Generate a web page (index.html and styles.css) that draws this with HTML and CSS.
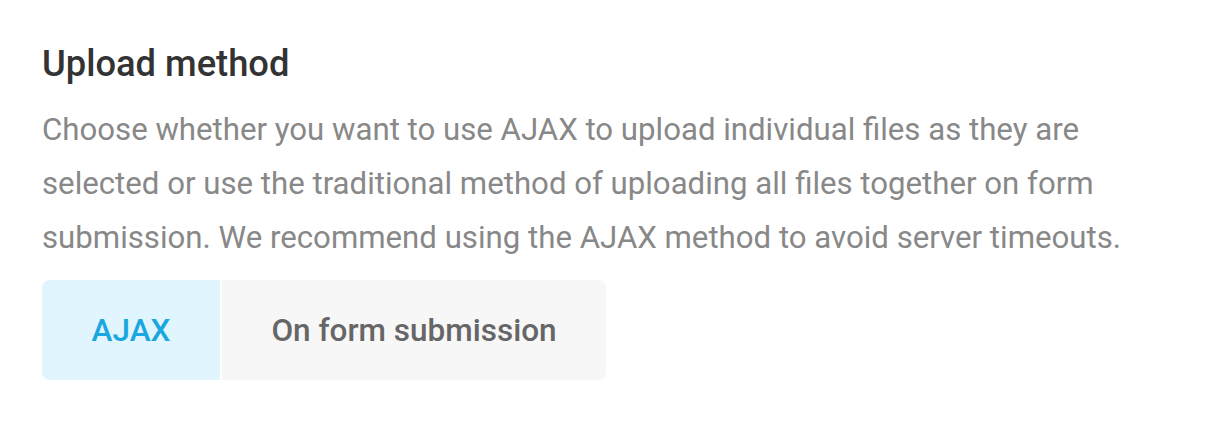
FILE: index.html
```html
<!DOCTYPE html>
<html>
<head>
<meta charset="utf-8">
<link rel="stylesheet" href="styles.css">
</head>
<body>
<div class="setting">
  <h2 class="title">Upload method</h2>
  <p class="desc">Choose whether you want to use AJAX to upload individual files as they are selected or use the traditional method of uploading all files together on form submission. We recommend using the AJAX method to avoid server timeouts.</p>
  <div class="segmented">
    <button class="seg active">AJAX</button>
    <button class="seg">On form submission</button>
  </div>
</div>
</body>
</html>
```
FILE: styles.css
```css
html, body { margin: 0; padding: 0; background: #fff; }
body { font-family: Roboto, "Noto Sans", sans-serif; }
.setting { padding: 42px 42px 0 42px; width: 1100px; }
.title { margin: 0; font-size: 36.3px; font-weight: 500; color: #333; line-height: 44px; }
.desc { margin: 17px 0 0 0; font-size: 31.2px; line-height: 54px; color: #888; font-weight: 400; }
.segmented { display: inline-flex; margin-top: 15px; gap: 2px; border-radius: 8px; overflow: hidden; }
.seg { border: 0; margin: 0; height: 100px; font-family: inherit; font-size: 31.5px; font-weight: 500; background: #f7f7f7; color: #666; padding: 0; }
.seg.active { background: #e0f5fd; color: #1aa7e0; width: 178px; }
.seg:not(.active) { width: 384px; }
```
